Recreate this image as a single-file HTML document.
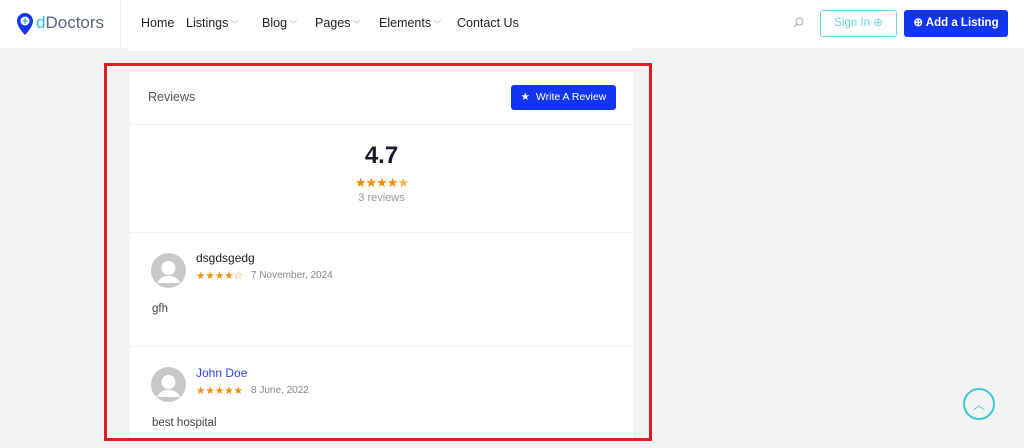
<!DOCTYPE html>
<html><head><meta charset="utf-8"><style>
*{margin:0;padding:0;box-sizing:border-box}
body{width:1024px;height:448px;overflow:hidden;background:#f3f3f4;font-family:"Liberation Sans",sans-serif;position:relative;color:#222}
.hdr{position:absolute;left:0;top:0;width:1024px;height:48px;background:#fff}
.a{position:absolute;white-space:nowrap}
.nav{font-size:12.5px;color:#222;top:16px}
.chev{font-size:8px;color:#aaa}
.card{position:absolute;left:130px;width:503px;background:#fff}
.star{color:#f28c00}
</style></head><body>
<div class="hdr"></div>
<div class="a" style="left:120px;top:0;width:1px;height:48px;background:#eef0f6"></div>
<svg class="a" style="left:16px;top:12px" width="18" height="24" viewBox="0 0 18 24"><path d="M9 1a8 8 0 0 0-8 8c0 6 8 14 8 14s8-8 8-14a8 8 0 0 0-8-8z" fill="#1533f0"/><circle cx="9" cy="9" r="4.5" fill="#fff"/><path d="M9 6.5v5M6.5 9h5" stroke="#2bc1d8" stroke-width="1.6"/></svg>
<div class="a" style="left:36px;top:13px;font-size:17px;color:#5b6478"><span style="color:#2bc1d8">d</span>Doctors</div>
<div class="a nav" style="left:141px">Home</div>
<div class="a nav" style="left:186px">Listings<span class="chev"> ﹀</span></div>
<div class="a nav" style="left:262px">Blog<span class="chev"> ﹀</span></div>
<div class="a nav" style="left:315px">Pages<span class="chev"> ﹀</span></div>
<div class="a nav" style="left:379px">Elements<span class="chev"> ﹀</span></div>
<div class="a nav" style="left:457px">Contact Us</div>
<svg class="a" style="left:793px;top:17px" width="11" height="11" viewBox="0 0 11 11"><circle cx="6.5" cy="4.5" r="3.5" fill="none" stroke="#aab" stroke-width="1"/><path d="M4 7L1 10" stroke="#aab"/></svg>
<div class="a" style="left:820px;top:10px;width:77px;height:27px;border:1.5px solid #6ad6e4;border-radius:3px;color:#6ad6e4;font-size:11.5px;text-align:center;line-height:24px">Sign In ⊕</div>
<div class="a" style="left:904px;top:10px;width:104px;height:27px;background:#1235f2;border-radius:3px;color:#fff;font-size:11.5px;font-weight:bold;text-align:center;line-height:27px">⊕ Add a Listing</div>
<div class="card" style="top:48px;height:3px;left:127px;width:506px"></div>
<div class="card" style="top:72px;height:368px"></div>
<div class="a" style="left:148px;top:90px;font-size:12.5px;color:#555">Reviews</div>
<div class="a" style="left:511px;top:85px;width:105px;height:25px;background:#1235f2;border-radius:3px;color:#fff;font-size:10.5px;text-align:center;line-height:25px">★ &nbsp;Write A Review</div>
<div class="a" style="left:130px;top:124px;width:503px;height:1px;background:#eef0f3"></div>
<div class="a" style="left:130px;top:142px;width:503px;text-align:center;font-size:24px;font-weight:bold;color:#1a1a2a">4.7</div>
<div class="a star" style="left:130px;top:175px;width:503px;text-align:center;font-size:13px;letter-spacing:-1px">★★★★<span style="opacity:.7">★</span></div>
<div class="a" style="left:130px;top:192px;width:503px;text-align:center;font-size:11px;color:#999">3 reviews</div>
<div class="a" style="left:130px;top:232px;width:503px;height:1px;background:#eef0f3"></div>
<svg class="a" style="left:151px;top:253px" width="35" height="35" viewBox="0 0 35 35"><circle cx="17.5" cy="17.5" r="17.5" fill="#c8c8c8"/><circle cx="17.5" cy="15" r="7" fill="#fff"/><path d="M6 30a12 10 0 0 1 23 0z" fill="#fff"/></svg>
<div class="a" style="left:196px;top:251px;font-size:12px;color:#222">dsgdsgedg</div>
<div class="a star" style="left:196px;top:270px;font-size:10.5px">★★★★☆</div>
<div class="a" style="left:251px;top:270px;font-size:10px;color:#888">7 November, 2024</div>
<div class="a" style="left:152px;top:303px;font-size:11.5px;color:#444">gfh</div>
<div class="a" style="left:130px;top:346px;width:503px;height:1px;background:#eef0f3"></div>
<svg class="a" style="left:151px;top:367px" width="35" height="35" viewBox="0 0 35 35"><circle cx="17.5" cy="17.5" r="17.5" fill="#c8c8c8"/><circle cx="17.5" cy="15" r="7" fill="#fff"/><path d="M6 30a12 10 0 0 1 23 0z" fill="#fff"/></svg>
<div class="a" style="left:196px;top:366px;font-size:12px;color:#2c47f0">John Doe</div>
<div class="a star" style="left:196px;top:385px;font-size:10.5px">★★★★★</div>
<div class="a" style="left:251px;top:385px;font-size:10px;color:#888">8 June, 2022</div>
<div class="a" style="left:152px;top:417px;font-size:11.5px;color:#444">best hospital</div>
<div class="a" style="left:104px;top:63px;width:548px;height:378px;border:3px solid #e31b23"></div>
<div class="a" style="left:963px;top:388px;width:32px;height:32px;border:2px solid #3ec8dc;border-radius:50%;color:#3ec8dc;font-size:12px;text-align:center;line-height:30px">︿</div>
</body></html>
